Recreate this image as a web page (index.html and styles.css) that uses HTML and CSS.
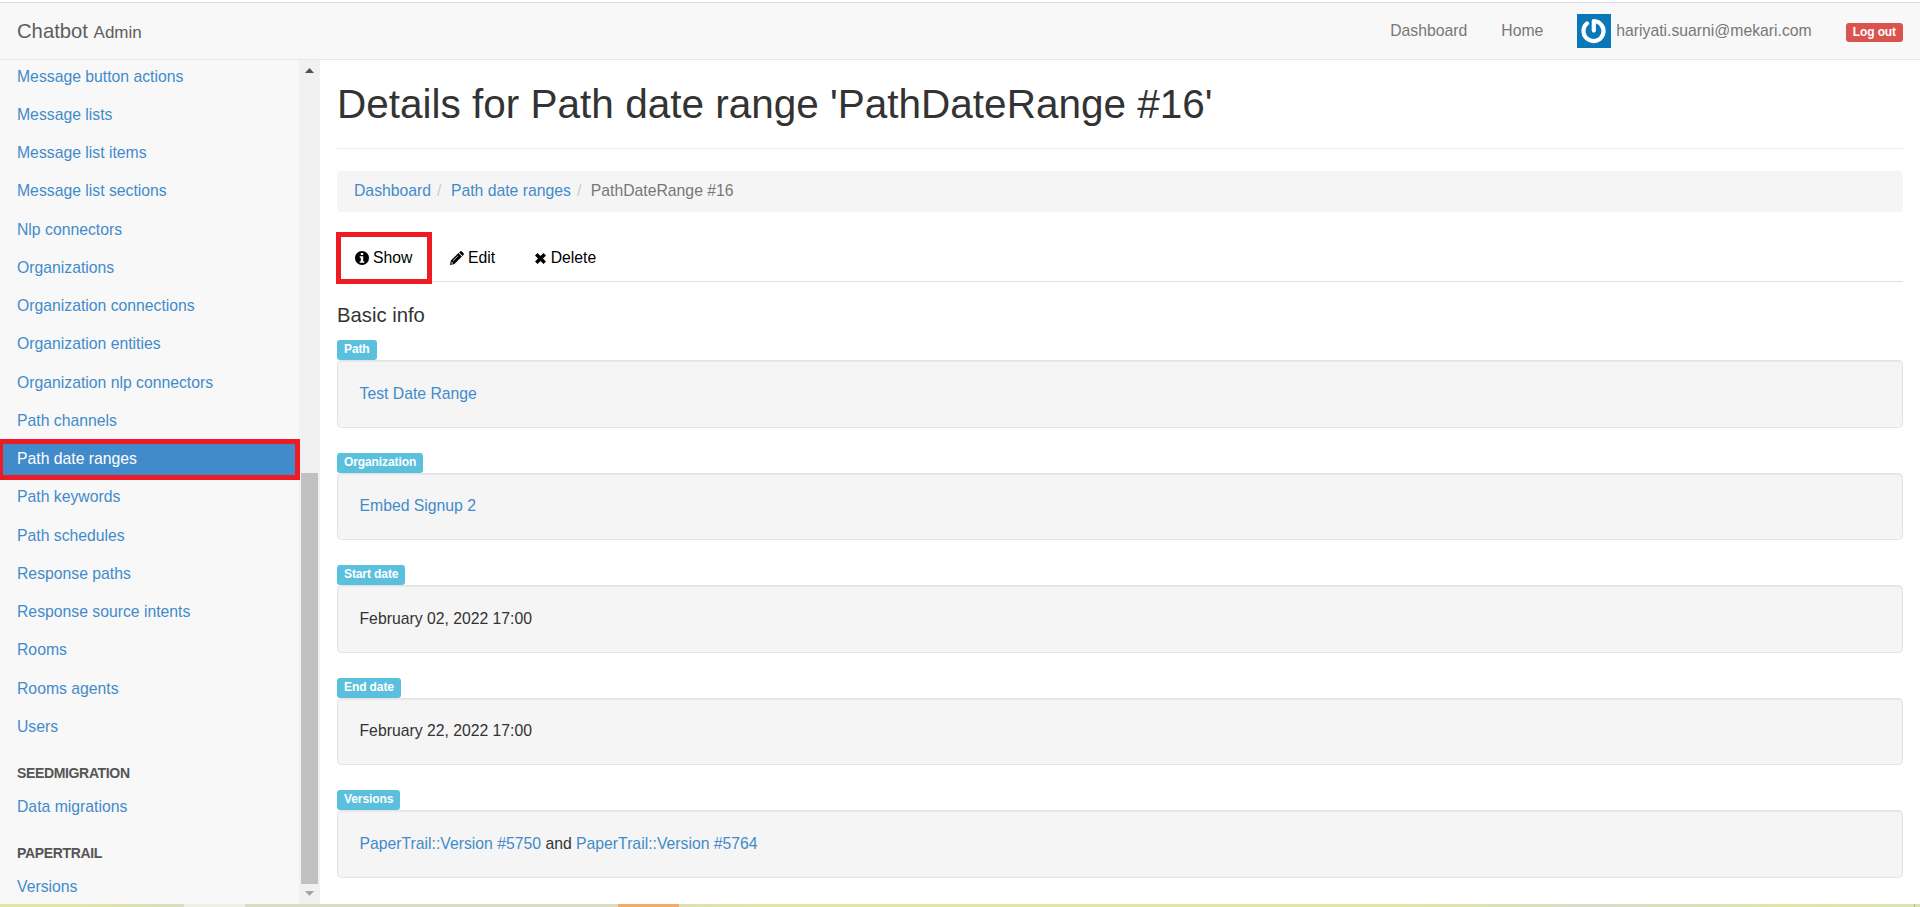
FILE: index.html
```html
<!DOCTYPE html>
<html lang="en">
<head>
<meta charset="utf-8">
<title>Details for Path date range 'PathDateRange #16'</title>
<link rel="stylesheet" href="styles.css">
</head>
<body>
<header class="navbar">
  <a class="brand">Chatbot <small>Admin</small></a>
  <nav class="topnav">
    <a class="top-link dash">Dashboard</a>
    <a class="top-link home">Home</a>
    <a class="top-link user">
      <svg class="avatar" viewBox="0 0 34 34" preserveAspectRatio="none"><rect width="34" height="34" fill="#0a77b8"/><path d="M10 9.4A10 10 0 1 0 16.8 7V16.6" fill="none" stroke="#fff" stroke-width="4.2" stroke-linecap="round" stroke-linejoin="round"/></svg>
      <span>hariyati.suarni@mekari.com</span>
    </a>
    <a class="logout">Log out</a>
  </nav>
</header>
<div class="body">
  <aside class="sidebar">
    <ul class="menu">
      <li>Message button actions</li>
      <li>Message lists</li>
      <li>Message list items</li>
      <li>Message list sections</li>
      <li>Nlp connectors</li>
      <li>Organizations</li>
      <li>Organization connections</li>
      <li>Organization entities</li>
      <li>Organization nlp connectors</li>
      <li>Path channels</li>
      <li class="active">Path date ranges</li>
      <li>Path keywords</li>
      <li>Path schedules</li>
      <li>Response paths</li>
      <li>Response source intents</li>
      <li>Rooms</li>
      <li>Rooms agents</li>
      <li>Users</li>
      <li class="heading">SEEDMIGRATION</li>
      <li>Data migrations</li>
      <li class="heading">PAPERTRAIL</li>
      <li>Versions</li>
    </ul>
  </aside>
  <div class="scrollbar">
    <svg class="arrow" viewBox="0 0 9 5"><path d="M0 5L4.5 0L9 5Z" fill="#505050"/></svg>
    <div class="thumb"></div>
    <svg class="arrow" viewBox="0 0 9 5"><path d="M0 0L4.5 5L9 0Z" fill="#a3a3a3"/></svg>
  </div>
  <main class="main">
    <h1>Details for Path date range 'PathDateRange #16'</h1>
    <div class="breadcrumb"><a>Dashboard</a><i>/</i><a>Path date ranges</a><i>/</i><span>PathDateRange #16</span></div>
    <div class="tabs">
      <a class="tab current"><svg class="icon" viewBox="0 0 14 14"><path fill-rule="evenodd" d="M7 0a7 7 0 1 0 0 14A7 7 0 0 0 7 0ZM5.8 2h2.4v2H5.8ZM4.7 5.2h3.5v5h1.1v1.6H4.7v-1.6h1.1V6.8H4.7Z"/></svg>Show</a>
      <a class="tab edit"><svg class="icon" viewBox="0 0 14 14"><path fill-rule="evenodd" d="M0 14L.9 9.6L8.4 2.1L11.9 5.6L4.4 13.1ZM1.3 12.7L3.2 12.2L1.8 10.8ZM3.2 10L8.4 4.8L8 4.4L2.8 9.6ZM9.1 1.4L10.2.4Q11 -.2 11.8.4L13.6 2.2Q14.2 3 13.6 3.8L12.6 4.9Z"/></svg>Edit</a>
      <a class="tab delete"><svg class="icon x" viewBox="0 0 11 11"><path d="M2.5 0L5.5 3L8.5 0L11 2.5L8 5.5L11 8.5L8.5 11L5.5 8L2.5 11L0 8.5L3 5.5L0 2.5Z"/></svg>Delete</a>
    </div>
    <h4>Basic info</h4>
    <dl class="fields">
      <dt><span>Path</span></dt><dd><a>Test Date Range</a></dd>
      <dt><span>Organization</span></dt><dd><a>Embed Signup 2</a></dd>
      <dt><span>Start date</span></dt><dd>February 02, 2022 17:00</dd>
      <dt><span>End date</span></dt><dd>February 22, 2022 17:00</dd>
      <dt><span>Versions</span></dt><dd><a>PaperTrail::Version #5750</a> and <a>PaperTrail::Version #5764</a></dd>
    </dl>
  </main>
</div>
<div class="strip"></div>
</body>
</html>
```
FILE: styles.css
```css
* { box-sizing: border-box; }
body {
  margin: 0;
  height: 907px;
  overflow: hidden;
  display: flex;
  flex-direction: column;
  font: 15.75px/22.5px "Liberation Sans", Arial, sans-serif;
  color: #333;
  background: #fff;
}
a { color: #428bca; text-decoration: none; }
.navbar {
  flex: none;
  display: flex;
  justify-content: space-between;
  margin-top: 2px;
  height: 58px;
  padding: 0 17px;
  background: #f8f8f8;
  border-top: 1px solid #ddd;
  border-bottom: 1px solid #e7e7e7;
}
.brand { color: #5e5e5e; font-size: 20.25px; line-height: 56px; }
.brand small { font-size: 17px; }
.topnav { display: flex; align-items: center; }
.top-link { color: #777; line-height: 56px; height: 56px; }
.home { margin-left: 34px; }
.user { display: flex; margin-left: 34px; }
.avatar { width: 34px; height: 34px; margin: 11px 5px 0 0; }
.logout {
  margin: 3px 0 0 34px;
  padding: 0 7px;
  height: 19px;
  border-radius: 3px;
  background: #d9534f;
  color: #fff;
  font-size: 12px;
  letter-spacing: -0.1px;
  font-weight: bold;
  line-height: 19px;
}
.body { flex: none; display: flex; height: 844px; }
.sidebar { width: 299px; background: #f8f8f8; }
.menu { list-style: none; margin: 0; padding: 0.7px 0 0; }
.menu li { height: 38.25px; padding-left: 17px; line-height: 32.5px; color: #428bca; }
.menu .active {
  position: relative;
  z-index: 1;
  width: 300px;
  height: 41px;
  margin: -4.2px 0 1.45px;
  padding-left: 14px;
  line-height: 30px;
  color: #fff;
  background: #428bca;
  border: 5px solid #ed1c24;
  border-left-width: 3px;
}
.menu .heading {
  height: 41.6px;
  padding-top: 13px;
  font-size: 14px;
  letter-spacing: -0.35px;
  font-weight: bold;
  line-height: 22px;
  color: #555;
}
.scrollbar {
  width: 21px;
  display: flex;
  flex-direction: column;
  align-items: center;
  background: #f1f1f1;
}
.arrow { width: 9px; height: 5px; margin: 8px 0; }
.thumb { width: 17px; height: 411px; margin-top: auto; background: #c1c1c1; }
.thumb + .arrow { margin: 7px 0 8px; }
.main { flex: 1; padding: 0 17px; }
h1 {
  margin: 0;
  padding-top: 22px;
  height: 89px;
  border-bottom: 1px solid #eee;
  font-size: 40.5px;
  font-weight: normal;
  line-height: 44px;
}
.breadcrumb {
  margin-top: 22px;
  height: 41px;
  padding-left: 17px;
  line-height: 39px;
  border-radius: 4.5px;
  background: #f5f5f5;
  color: #777;
}
.breadcrumb i { font-style: normal; color: #ccc; padding: 0 9.5px 0 6px; }
.tabs {
  display: flex;
  margin-top: 20px;
  height: 50px;
  border-bottom: 1px solid #ddd;
}
.tab { display: flex; align-items: center; height: 52px; color: #000; }
.tab.current {
  position: relative;
  width: 96px;
  margin-left: -1px;
  padding-left: 14px;
  border: 5px solid #ed1c24;
}
.icon { width: 14px; height: 14px; margin-right: 4px; fill: #000; }
.icon.x { width: 11px; height: 11px; margin-right: 5px; }
.edit { margin-left: 18px; }
.delete { margin-left: 39.5px; }
h4 { margin: 22px 0 0; font-size: 20.25px; font-weight: normal; line-height: 22px; }
.fields { margin: 14px 0 0; }
dt { height: 20px; display: flex; }
dt span {
  padding: 0 7px;
  border-radius: 3px;
  background: #5bc0de;
  color: #fff;
  font-size: 12px;
  letter-spacing: -0.1px;
  font-weight: bold;
  line-height: 18px;
}
dd {
  margin: 0 0 25px;
  height: 67.5px;
  padding: 21.5px;
  border: 1px solid #e3e3e3;
  border-radius: 4.5px;
  background: #f5f5f5;
  box-shadow: inset 0 1px 1px rgba(0,0,0,.05);
}
.strip {
  flex: none;
  height: 3px;
  background:
    linear-gradient(90deg, transparent 184px, #eef0e4 184px 245px, transparent 245px 618px, #f5aa69 618px 679px, transparent 679px 1914px, #b5b890 1914px 1915px, transparent 1915px),
    linear-gradient(90deg, #e0e6a4 0, #e0e6a4 80px, #d9dcc0 184px, #d9dcc0 600px, #e0e6a4 760px, #e0e6a4 1400px, #d9dcc8 1590px, #dbe2b8 1720px, #e0e6a4 1780px, #dde2b4 1920px);
}
```
